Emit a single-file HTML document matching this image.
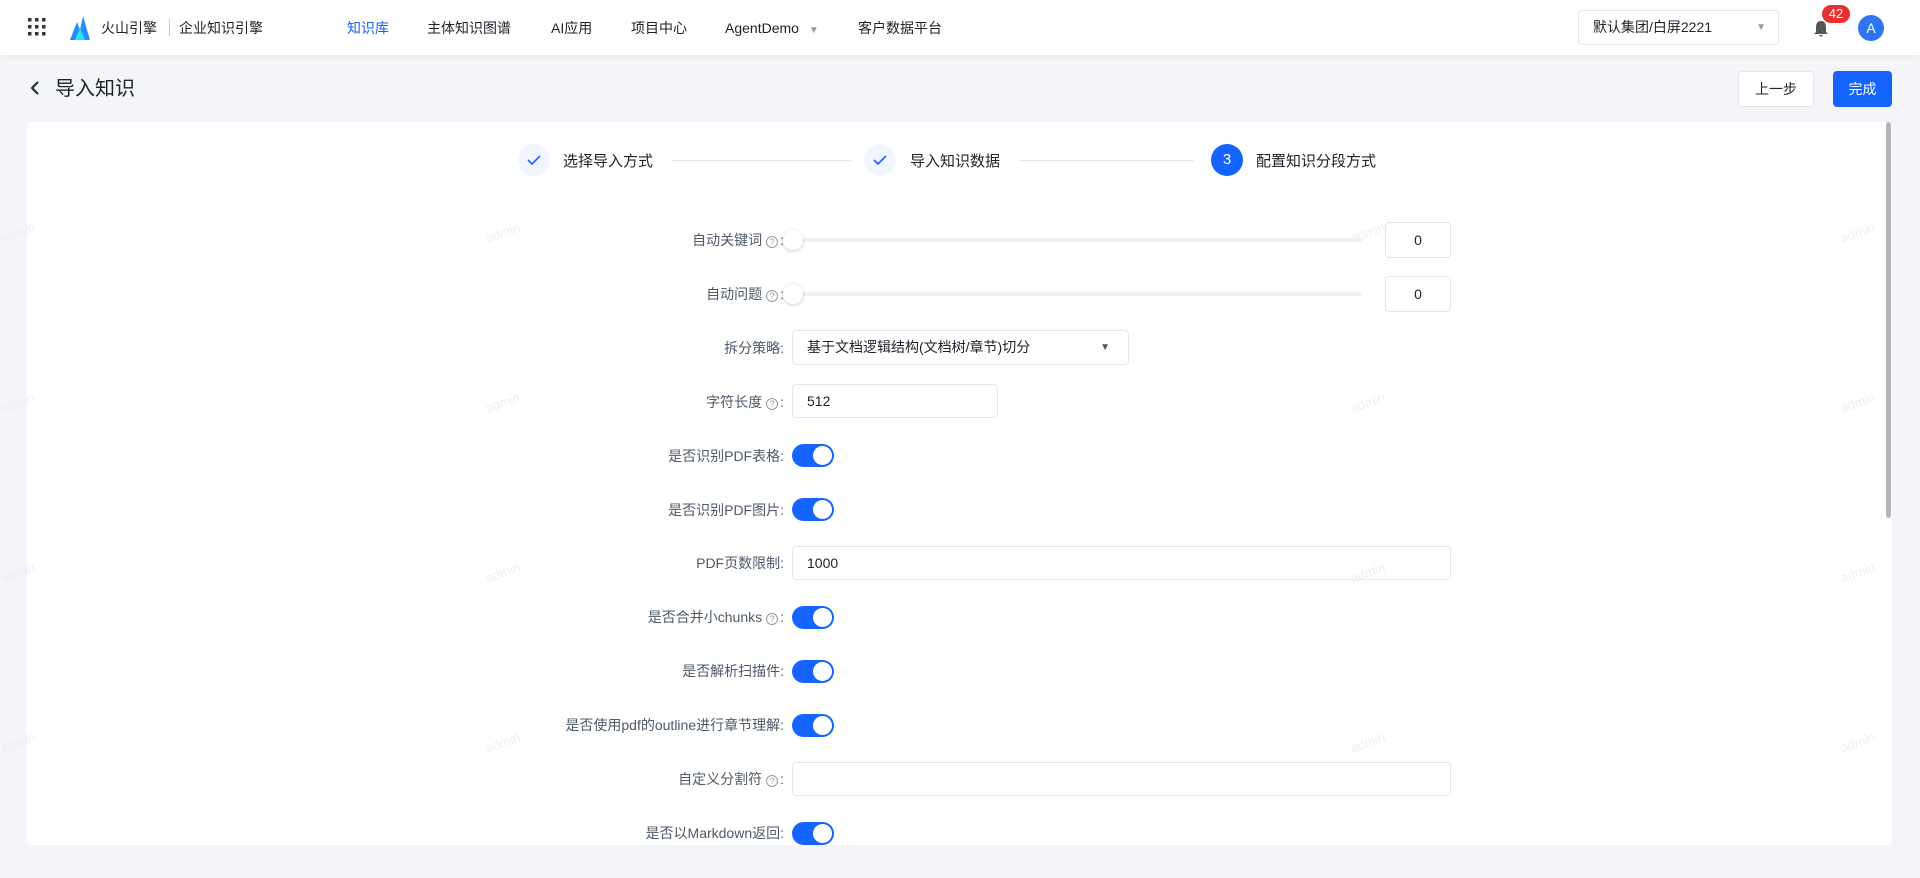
<!DOCTYPE html>
<html><head><meta charset="utf-8"><style>
*{box-sizing:border-box;margin:0;padding:0}
body{width:1920px;height:878px;overflow:hidden;background:#f3f5f9;font-family:"Liberation Sans","Noto Sans CJK SC",sans-serif;color:#1d2129;position:relative}
.a{position:absolute}
.hdr{left:0;top:0;width:1920px;height:55px;background:#fff;box-shadow:0 2px 6px rgba(0,0,0,.06)}
.nav{top:18px;font-size:14px;color:#1d2129;line-height:20px}
.card{left:27px;top:122px;width:1865px;height:723px;background:#fff;border-radius:4px;overflow:hidden}
.lbl{font-size:14px;color:#4e5969;text-align:right;width:700px;right:0;line-height:20px}
.q{display:inline-block;width:12px;height:12px;border:1px solid #999;border-radius:50%;font-size:9px;line-height:10px;text-align:center;color:#999;margin:0 2px 0 4px;vertical-align:0}
.tg{width:42px;height:23px;border-radius:12px;background:#1664ff}
.tg:after{content:"";position:absolute;right:2px;top:2px;width:19px;height:19px;border-radius:50%;background:#fff}
.inp{border:1px solid #e5e6eb;border-radius:4px;background:#fff;font-size:14px;line-height:32px;padding-left:14px}
.wm{font-size:13px;color:#eceef2;transform:rotate(-20deg)}
.sc{width:32px;height:32px;border-radius:50%}
</style></head><body>
<div class="a hdr"></div>
<svg class="a" style="left:28px;top:18px" width="18" height="18"><g fill="#333"><rect x="0" y="0" width="3.5" height="3.5"/><rect x="7" y="0" width="3.5" height="3.5"/><rect x="14" y="0" width="3.5" height="3.5"/><rect x="0" y="7" width="3.5" height="3.5"/><rect x="7" y="7" width="3.5" height="3.5"/><rect x="14" y="7" width="3.5" height="3.5"/><rect x="0" y="14" width="3.5" height="3.5"/><rect x="7" y="14" width="3.5" height="3.5"/><rect x="14" y="14" width="3.5" height="3.5"/></g></svg>
<svg class="a" style="left:70px;top:16px" width="20" height="24"><path d="M0 24 L7 6 L10 14 L13 0 L20 24Z" fill="#1f8fff"/><path d="M5 24 L10 12 L15 24Z" fill="#2ee0f0"/></svg>
<div class="a nav" style="left:101px">火山引擎</div>
<div class="a" style="left:169px;top:19px;width:1px;height:17px;background:#ccc"></div>
<div class="a nav" style="left:179px">企业知识引擎</div>
<div class="a nav" style="left:347px;color:#1664ff">知识库</div>
<div class="a nav" style="left:427px">主体知识图谱</div>
<div class="a nav" style="left:551px">AI应用</div>
<div class="a nav" style="left:631px">项目中心</div>
<div class="a nav" style="left:725px">AgentDemo <span style="color:#999;font-size:10px;margin-left:6px">▼</span></div>
<div class="a nav" style="left:858px">客户数据平台</div>
<div class="a inp" style="left:1578px;top:10px;width:201px;height:35px;line-height:33px;font-size:14px">默认集团/白屏2221<span style="position:absolute;right:12px;color:#999;font-size:10px">▼</span></div>
<svg class="a" style="left:1813px;top:20px" width="16" height="18"><path d="M8 1 C4 1 3 4 3 8 L3 12 L1 14 L15 14 L13 12 L13 8 C13 4 12 1 8 1Z M6 15 L10 15 L8 17Z" fill="#555"/></svg>
<div class="a" style="left:1822px;top:5px;width:28px;height:18px;border-radius:9px;background:#e8302e;color:#fff;font-size:13px;text-align:center;line-height:18px">42</div>
<div class="a" style="left:1858px;top:15px;width:26px;height:26px;border-radius:50%;background:#2f74f0;color:#fff;font-size:14px;text-align:center;line-height:26px">A</div>
<svg class="a" style="left:30px;top:81px" width="10" height="14"><path d="M8 1 L2 7 L8 13" stroke="#1d2129" stroke-width="2" fill="none"/></svg>
<div class="a" style="left:55px;top:76px;font-size:20px;line-height:26px">导入知识</div>
<div class="a" style="left:1738px;top:71px;width:76px;height:36px;background:#fff;border:1px solid #e5e6eb;border-radius:4px;text-align:center;line-height:34px;font-size:14px">上一步</div>
<div class="a" style="left:1833px;top:71px;width:59px;height:36px;background:#1664ff;border-radius:4px;text-align:center;line-height:36px;font-size:14px;color:#fff">完成</div>
<div class="a card">
<div class="a" style="left:1859px;top:0;width:5px;height:396px;background:#b5b5b5;border-radius:3px"></div>
</div>
<div class="a sc" style="left:518px;top:144px;background:#f0f5ff"></div>
<svg class="a" style="left:526px;top:153px" width="16" height="14"><path d="M2 7 L6 11 L14 3" stroke="#1664ff" stroke-width="1.6" fill="none"/></svg>
<div class="a" style="left:563px;top:150px;font-size:15px">选择导入方式</div>
<div class="a" style="left:671px;top:160px;width:180px;height:1px;background:#e5e6eb"></div>
<div class="a sc" style="left:864px;top:144px;background:#f0f5ff"></div>
<svg class="a" style="left:872px;top:153px" width="16" height="14"><path d="M2 7 L6 11 L14 3" stroke="#1664ff" stroke-width="1.6" fill="none"/></svg>
<div class="a" style="left:910px;top:150px;font-size:15px">导入知识数据</div>
<div class="a" style="left:1019px;top:160px;width:175px;height:1px;background:#e5e6eb"></div>
<div class="a sc" style="left:1211px;top:144px;background:#1664ff;color:#fff;text-align:center;line-height:32px;font-size:15px">3</div>
<div class="a" style="left:1256px;top:150px;font-size:15px">配置知识分段方式</div>

<!-- form rows; label right edge 784 -->
<div class="a lbl" style="left:84px;top:230px">自动关键词<span class="q">?</span>:</div>
<div class="a" style="left:792px;top:238px;width:570px;height:4px;background:#f0f1f3;border-radius:2px"></div>
<div class="a" style="left:783px;top:230px;width:20px;height:20px;border-radius:50%;background:#fff;box-shadow:0 1px 4px rgba(0,0,0,.2)"></div>
<div class="a inp" style="left:1385px;top:222px;width:66px;height:36px;padding:0;text-align:center;line-height:34px">0</div>

<div class="a lbl" style="left:84px;top:284px">自动问题<span class="q">?</span>:</div>
<div class="a" style="left:792px;top:292px;width:570px;height:4px;background:#f0f1f3;border-radius:2px"></div>
<div class="a" style="left:783px;top:284px;width:20px;height:20px;border-radius:50%;background:#fff;box-shadow:0 1px 4px rgba(0,0,0,.2)"></div>
<div class="a inp" style="left:1385px;top:276px;width:66px;height:36px;padding:0;text-align:center;line-height:34px">0</div>

<div class="a lbl" style="left:84px;top:338px">拆分策略:</div>
<div class="a inp" style="left:792px;top:330px;width:337px;height:35px;line-height:33px">基于文档逻辑结构(文档树/章节)切分<span style="position:absolute;right:18px;color:#555;font-size:10px">▼</span></div>

<div class="a lbl" style="left:84px;top:392px">字符长度<span class="q">?</span>:</div>
<div class="a inp" style="left:792px;top:384px;width:206px;height:34px">512</div>

<div class="a lbl" style="left:84px;top:446px">是否识别PDF表格:</div>
<div class="a tg" style="left:792px;top:444px"></div>
<div class="a lbl" style="left:84px;top:500px">是否识别PDF图片:</div>
<div class="a tg" style="left:792px;top:498px"></div>

<div class="a lbl" style="left:84px;top:553px">PDF页数限制:</div>
<div class="a inp" style="left:792px;top:546px;width:659px;height:34px">1000</div>

<div class="a lbl" style="left:84px;top:607px">是否合并小chunks<span class="q">?</span>:</div>
<div class="a tg" style="left:792px;top:606px"></div>
<div class="a lbl" style="left:84px;top:661px">是否解析扫描件:</div>
<div class="a tg" style="left:792px;top:660px"></div>
<div class="a lbl" style="left:84px;top:715px">是否使用pdf的outline进行章节理解:</div>
<div class="a tg" style="left:792px;top:714px"></div>
<div class="a lbl" style="left:84px;top:769px">自定义分割符<span class="q">?</span>:</div>
<div class="a inp" style="left:792px;top:762px;width:659px;height:34px"></div>
<div class="a" style="left:27px;top:790px;width:1865px;height:55px;overflow:hidden">
<div class="a lbl" style="left:57px;top:33px">是否以Markdown返回:</div>
<div class="a tg" style="left:765px;top:32px"></div>
</div>

<div class="a wm" style="left:0px;top:225px">admin</div>
<div class="a wm" style="left:485px;top:225px">admin</div>
<div class="a wm" style="left:1350px;top:225px">admin</div>
<div class="a wm" style="left:1840px;top:225px">admin</div>
<div class="a wm" style="left:0px;top:395px">admin</div>
<div class="a wm" style="left:485px;top:395px">admin</div>
<div class="a wm" style="left:1350px;top:395px">admin</div>
<div class="a wm" style="left:1840px;top:395px">admin</div>
<div class="a wm" style="left:0px;top:565px">admin</div>
<div class="a wm" style="left:485px;top:565px">admin</div>
<div class="a wm" style="left:1350px;top:565px">admin</div>
<div class="a wm" style="left:1840px;top:565px">admin</div>
<div class="a wm" style="left:0px;top:735px">admin</div>
<div class="a wm" style="left:485px;top:735px">admin</div>
<div class="a wm" style="left:1350px;top:735px">admin</div>
<div class="a wm" style="left:1840px;top:735px">admin</div>
</body></html>
